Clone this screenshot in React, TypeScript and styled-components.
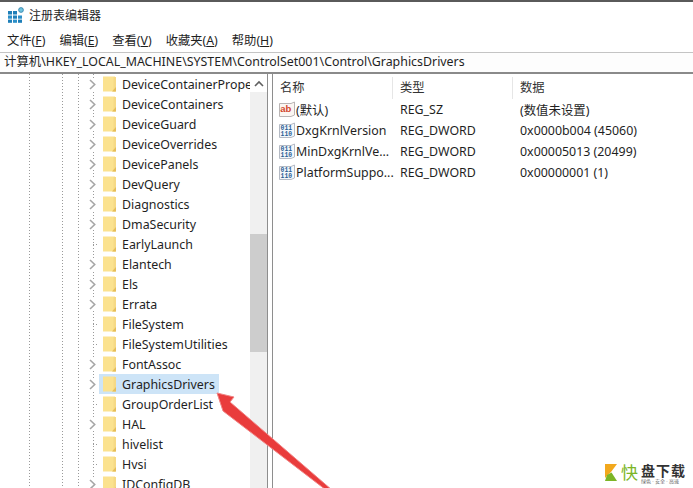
import React from 'react';
import styled, { createGlobalStyle } from 'styled-components';

const treeItems: { name: string; arrow: boolean }[] = [
  { name: 'DeviceContainerPrope', arrow: true },
  { name: 'DeviceContainers', arrow: true },
  { name: 'DeviceGuard', arrow: true },
  { name: 'DeviceOverrides', arrow: true },
  { name: 'DevicePanels', arrow: true },
  { name: 'DevQuery', arrow: true },
  { name: 'Diagnostics', arrow: true },
  { name: 'DmaSecurity', arrow: true },
  { name: 'EarlyLaunch', arrow: false },
  { name: 'Elantech', arrow: true },
  { name: 'Els', arrow: true },
  { name: 'Errata', arrow: true },
  { name: 'FileSystem', arrow: false },
  { name: 'FileSystemUtilities', arrow: false },
  { name: 'FontAssoc', arrow: true },
  { name: 'GraphicsDrivers', arrow: true },
  { name: 'GroupOrderList', arrow: false },
  { name: 'HAL', arrow: true },
  { name: 'hivelist', arrow: false },
  { name: 'Hvsi', arrow: false },
  { name: 'IDConfigDB', arrow: true },
];

const values = [
  { name: '(默认)', type: 'REG_SZ', data: '(数值未设置)', kind: 'ab' },
  { name: 'DxgKrnlVersion', type: 'REG_DWORD', data: '0x0000b004 (45060)', kind: 'bin' },
  { name: 'MinDxgKrnlVe...', type: 'REG_DWORD', data: '0x00005013 (20499)', kind: 'bin' },
  { name: 'PlatformSuppo...', type: 'REG_DWORD', data: '0x00000001 (1)', kind: 'bin' },
];

const menus = [
  ['文件(', 'F', ')'],
  ['编辑(', 'E', ')'],
  ['查看(', 'V', ')'],
  ['收藏夹(', 'A', ')'],
  ['帮助(', 'H', ')'],
];

const AppIcon = () => (
  <svg width="16" height="16" viewBox="0 0 16 16">
    <rect x="0" y="4" width="4" height="3.5" fill="#1f7fb8" />
    <rect x="5" y="4" width="4" height="3.5" fill="#1f7fb8" />
    <rect x="0" y="8.5" width="4" height="3.2" fill="#2b8fc8" />
    <rect x="5" y="8.5" width="4" height="3.2" fill="#1f7fb8" />
    <rect x="10" y="8.5" width="4" height="3.2" fill="#2b8fc8" />
    <rect x="0" y="12.6" width="4" height="3.2" fill="#1f7fb8" />
    <rect x="5" y="12.6" width="4" height="3.2" fill="#2b8fc8" />
    <rect x="10" y="12.6" width="4" height="3.2" fill="#1f7fb8" />
    <circle cx="13" cy="3" r="2.4" fill="#6fc3df" stroke="#2d7fa8" strokeWidth="0.8" />
  </svg>
);

const Chevron = () => (
  <svg width="8" height="11" viewBox="0 0 8 11">
    <path d="M1 1 L5.7 5.5 L1 10" fill="none" stroke="#a6a6a6" strokeWidth="1.6" />
  </svg>
);

const FolderIcon = () => (
  <svg width="13" height="16" viewBox="0 0 13 16">
    <rect x="0" y="0.5" width="12" height="15" fill="#fbe28f" />
    <rect x="10.5" y="1" width="2.5" height="14.5" fill="#f6d985" />
    <path d="M9 15.5 L13 11 V15.5 Z" fill="#e6bd58" />
  </svg>
);

const AbIcon = () => (
  <svg width="16" height="17" viewBox="0 0 16 17">
    <path d="M0.5 2.5 H12 L15.5 1 V14 L12 15.5 H0.5 Z" fill="#fbf6f2" stroke="#b9b4b4" />
    <text x="1.2" y="11" fontFamily="'Liberation Sans', sans-serif" fontWeight="700" fontSize="9.5" fill="#d2452c">
      ab
    </text>
  </svg>
);

const BinIcon = () => (
  <svg width="16" height="17" viewBox="0 0 16 17">
    <path d="M0.5 2.5 H12 L15.5 1 V14 L12 15.5 H0.5 Z" fill="#f4f7fb" stroke="#b4bac4" />
    <text x="1.6" y="7.6" fontFamily="'Liberation Mono', monospace" fontWeight="700" fontSize="6.4" fill="#2a5f95">
      011
    </text>
    <text x="1.6" y="13.6" fontFamily="'Liberation Mono', monospace" fontWeight="700" fontSize="6.4" fill="#2a5f95">
      110
    </text>
  </svg>
);

const App: React.FC = () => (
  <Page>
    <GlobalStyle />
    <TitleBar>
      <AppIcon />
      <TitleText>注册表编辑器</TitleText>
    </TitleBar>
    <MenuBar>
      {menus.map(([before, key, after]) => (
        <MenuItem key={key}>
          {before}
          <u>{key}</u>
          {after}
        </MenuItem>
      ))}
    </MenuBar>
    <AddressBar>计算机\HKEY_LOCAL_MACHINE\SYSTEM\ControlSet001\Control\GraphicsDrivers</AddressBar>
    <Panes>
      <TreePane>
        {treeItems.map((item) => (
          <TreeRow key={item.name}>
            <Expander $arrow={item.arrow}>{item.arrow ? <Chevron /> : null}</Expander>
            <TreeLabel $selected={item.name === 'GraphicsDrivers'}>
              <FolderIcon />
              <TreeName>{item.name}</TreeName>
            </TreeLabel>
          </TreeRow>
        ))}
      </TreePane>
      <ScrollTrack>
        <ScrollUp>
          <svg width="10" height="7" viewBox="0 0 10 7">
            <path d="M1 6 L5 2 L9 6" fill="none" stroke="#606060" strokeWidth="1.6" />
          </svg>
        </ScrollUp>
        <ScrollThumb />
      </ScrollTrack>
      <Splitter />
      <ValuePane>
        <HeaderRow>
          <HeaderCell>名称</HeaderCell>
          <HeaderCell>类型</HeaderCell>
          <HeaderCell>数据</HeaderCell>
        </HeaderRow>
        {values.map((v) => (
          <ValueRow key={v.name}>
            <NameCell>
              {v.kind === 'ab' ? <AbIcon /> : <BinIcon />}
              <span>{v.name}</span>
            </NameCell>
            <span>{v.type}</span>
            <span>{v.data}</span>
          </ValueRow>
        ))}
      </ValuePane>
    </Panes>
    <Pointer viewBox="0 0 120 100" width="120" height="100">
      <path d="M0 1 L17 5 L13 10 L115 98 L109 98 L6 19 Z" fill="#e93c3c" stroke="#f08484" strokeWidth="1" />
    </Pointer>
    <Watermark>
      <svg width="12" height="17" viewBox="0 0 12 17">
        <path d="M0 0 H12 L6 8 L0 8 Z" fill="#f2a81d" />
        <path d="M0 0 L6 8 L0 14 Z" fill="#f2a81d" />
        <path d="M2 11 L6.5 8.5 L12 17 H0 Z" fill="#7cb526" />
      </svg>
      <WmFast>快</WmFast>
      <WmText>
        <WmTitle>盘下载</WmTitle>
        <WmSub>绿色 · 安全 · 高速</WmSub>
      </WmText>
    </Watermark>
  </Page>
);

const GlobalStyle = createGlobalStyle`
  html, body {
    margin: 0;
    padding: 0;
    background: #fff;
  }
`;

const Page = styled.div`
  position: relative;
  width: 693px;
  height: 488px;
  overflow: hidden;
  box-sizing: border-box;
  background: #fff;
  border-top: 2px solid #5a5a5a;
  color: #1f1f1f;
  font-family: 'Noto Sans', 'Noto Sans CJK SC', sans-serif;
  font-size: 12.4px;
`;

const TitleBar = styled.div`
  display: flex;
  align-items: center;
  gap: 5px;
  height: 26px;
  padding: 0 0 1px 8px;
  box-sizing: border-box;
`;

const TitleText = styled.span`
  font-size: 12px;
`;

const MenuBar = styled.div`
  display: flex;
  gap: 14px;
  height: 24px;
  align-items: center;
  padding-left: 7px;
  box-sizing: border-box;
`;

const MenuItem = styled.span`
  font-size: 12.3px;
  white-space: nowrap;
  u {
    text-underline-offset: 1px;
  }
`;

const AddressBar = styled.div`
  box-sizing: border-box;
  height: 22px;
  line-height: 17px;
  padding-left: 4px;
  border-top: 1px solid #c4c4c4;
  border-bottom: 2px solid #8a8a8a;
  font-size: 12.4px;
  white-space: nowrap;
  background: #fdfdfd;
`;

const Panes = styled.div`
  display: flex;
  height: 414px;
`;

const TreePane = styled.div`
  flex: 0 0 250px;
  box-sizing: border-box;
  overflow: hidden;
  background-image:
    repeating-linear-gradient(#9a9a9a 0 1px, transparent 1px 3px),
    repeating-linear-gradient(#9a9a9a 0 1px, transparent 1px 3px),
    repeating-linear-gradient(#9a9a9a 0 1px, transparent 1px 3px),
    repeating-linear-gradient(#9a9a9a 0 1px, transparent 1px 3px);
  background-size: 1px 100%;
  background-repeat: no-repeat;
  background-position: 29px 0, 62px 0, 78px 0, 93px 0;
`;

const TreeRow = styled.div`
  display: flex;
  align-items: center;
  height: 20px;
  padding-left: 89px;
`;

const Expander = styled.div<{ $arrow: boolean }>`
  flex: 0 0 10px;
  height: 20px;
  display: flex;
  align-items: center;
  svg {
    background: #fff;
  }
  background: ${(p) =>
    p.$arrow
      ? 'none'
      : 'repeating-linear-gradient(90deg, #9a9a9a 0 1px, transparent 1px 3px) 4px 10px / 6px 1px no-repeat'};
`;

const TreeLabel = styled.div<{ $selected: boolean }>`
  display: flex;
  align-items: center;
  gap: 6px;
  flex: none;
  height: 20px;
  padding: 0 4px 0 4px;
  background: ${(p) => (p.$selected ? '#cde4f7' : 'transparent')};
  svg {
    flex: none;
  }
`;

const TreeName = styled.span`
  white-space: nowrap;
  line-height: 19px;
`;

const ScrollTrack = styled.div`
  flex: 0 0 17px;
  background: #f0f0f0;
  display: flex;
  flex-direction: column;
`;

const ScrollUp = styled.div`
  height: 17px;
  flex: none;
  display: flex;
  align-items: center;
  justify-content: center;
  background: #fff;
  padding-top: 1px;
`;

const ScrollThumb = styled.div`
  height: 118px;
  margin-top: 142px;
  background: #cdcdcd;
`;

const Splitter = styled.div`
  flex: 0 0 4px;
  background: #fff;
  border-left: 1px solid #8e8e8e;
  border-right: 1px solid #8e8e8e;
  box-sizing: content-box;
  width: 3px;
`;

const ValuePane = styled.div`
  flex: 1;
  padding-top: 3px;
`;

const HeaderRow = styled.div`
  display: grid;
  grid-template-columns: 120px 120px 1fr;
  height: 22px;
  align-items: center;
`;

const HeaderCell = styled.div`
  padding-left: 7px;
  height: 22px;
  line-height: 22px;
  color: #333;
  font-size: 12.3px;
  border-right: 1px solid #e6e6e6;
  &:last-child {
    border-right: none;
  }
`;

const ValueRow = styled.div`
  display: grid;
  grid-template-columns: 120px 120px 1fr;
  height: 21px;
  align-items: center;
  white-space: nowrap;
  & > span {
    padding-left: 7px;
  }
`;

const NameCell = styled.div`
  display: flex;
  align-items: center;
  gap: 1px;
  padding-left: 6px;
  svg {
    flex: none;
  }
`;

const Pointer = styled.svg`
  position: absolute;
  left: 217px;
  top: 390px;
  overflow: visible;
`;

const Watermark = styled.div`
  position: absolute;
  left: 605px;
  top: 462px;
  display: flex;
  align-items: flex-start;
`;

const WmFast = styled.span`
  color: #7cb526;
  font-size: 17px;
  line-height: 18px;
  margin: 0 3px 0 4px;
`;

const WmText = styled.div`
  display: flex;
  flex-direction: column;
  gap: 1px;
`;

const WmTitle = styled.span`
  font-size: 14px;
  line-height: 13px;
  font-weight: 700;
  color: #333;
  letter-spacing: 1px;
  white-space: nowrap;
`;

const WmSub = styled.span`
  font-size: 5px;
  line-height: 6px;
  color: #666;
  white-space: nowrap;
`;

export default App;
